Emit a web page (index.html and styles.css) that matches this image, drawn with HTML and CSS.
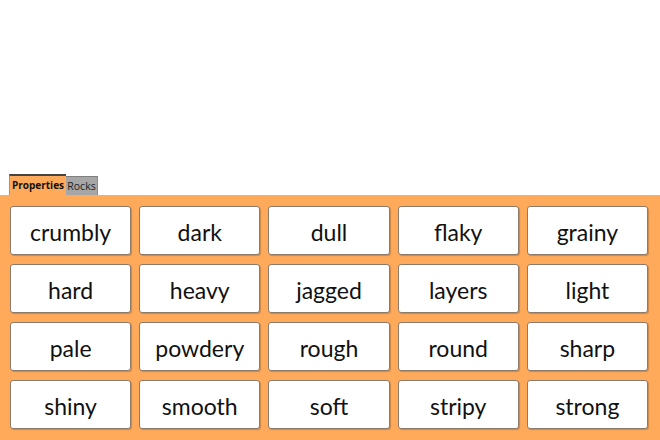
FILE: index.html
```html
<!DOCTYPE html>
<html>
<head>
<meta charset="utf-8">
<link rel="stylesheet" href="styles.css">
</head>
<body>
<div class="page">
  <div class="spacer"></div>
  <div class="tabs">
    <div class="tab active">Properties</div>
    <div class="tab">Rocks</div>
  </div>
  <div class="panel">
    <div class="card">crumbly</div>
    <div class="card">dark</div>
    <div class="card">dull</div>
    <div class="card">flaky</div>
    <div class="card">grainy</div>
    <div class="card">hard</div>
    <div class="card">heavy</div>
    <div class="card">jagged</div>
    <div class="card">layers</div>
    <div class="card">light</div>
    <div class="card">pale</div>
    <div class="card">powdery</div>
    <div class="card">rough</div>
    <div class="card">round</div>
    <div class="card">sharp</div>
    <div class="card">shiny</div>
    <div class="card">smooth</div>
    <div class="card">soft</div>
    <div class="card">stripy</div>
    <div class="card">strong</div>
  </div>
</div>
</body>
</html>
```

FILE: styles.css
```css
html, body {
  margin: 0;
  padding: 0;
  background: #ffffff;
}
.page {
  width: 660px;
  height: 440px;
  display: flex;
  flex-direction: column;
  overflow: hidden;
}
.spacer {
  height: 174px;
  flex: none;
}
.tabs {
  display: flex;
  align-items: flex-end;
  padding-left: 9px;
  height: 21px;
  flex: none;
}
.tab {
  font-family: "Open Sans", "Noto Sans", sans-serif;
  font-size: 10px;
  line-height: 1;
  box-sizing: border-box;
}
.tab.active {
  background: #ffaa5a;
  color: #111;
  font-weight: bold;
  height: 21px;
  width: 57px;
  border-top: 2px solid #444;
  border-left: 1px solid #c98a4e;
  display: flex;
  align-items: center;
  justify-content: center;
  padding-bottom: 1px;
}
.tab:not(.active) {
  background: #a6a6a6;
  color: #222;
  height: 19px;
  width: 32px;
  border-top: 1px solid #7f7f7f;
  border-right: 1px solid #8a8a8a;
  display: flex;
  align-items: center;
  justify-content: center;
  padding-top: 1px;
  font-size: 10.5px;
}
.panel {
  flex: 1;
  background: #ffaa5a;
  padding: 11px 12px 0 10px;
  display: grid;
  grid-template-columns: repeat(5, 1fr);
  grid-auto-rows: 49px;
  column-gap: 8px;
  row-gap: 9px;
  align-content: start;
}
.card {
  background: #fff;
  border: 1px solid #8c7a6a;
  border-radius: 3px;
  box-shadow: 1px 1px 1px rgba(0,0,0,0.2);
  display: flex;
  align-items: center;
  justify-content: center;
  font-family: Lato, "Open Sans", sans-serif;
  font-size: 23px;
  font-weight: 400;
  color: #111;
  padding-top: 2px;
  box-sizing: border-box;
}
```
